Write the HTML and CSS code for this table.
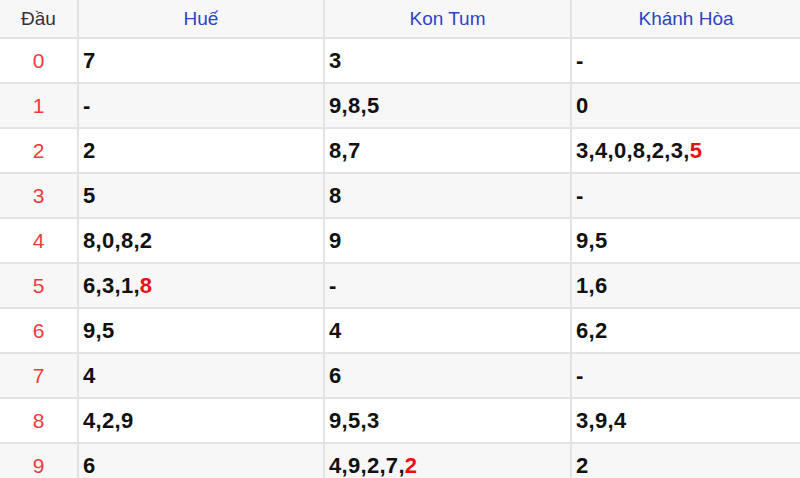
FILE: index.html
```html
<!DOCTYPE html>
<html>
<head>
<meta charset="utf-8">
<link rel="stylesheet" href="styles.css">
</head>
<body>
<table class="loto">
  <colgroup>
    <col class="c-dau"><col class="c-prov"><col class="c-prov2"><col>
  </colgroup>
  <thead>
    <tr><th class="dau-h">Đầu</th><th>Huế</th><th>Kon Tum</th><th>Khánh Hòa</th></tr>
  </thead>
  <tbody>
    <tr><td class="dau">0</td><td>7</td><td>3</td><td>-</td></tr>
    <tr><td class="dau">1</td><td>-</td><td>9,8,5</td><td>0</td></tr>
    <tr><td class="dau">2</td><td>2</td><td>8,7</td><td>3,4,0,8,2,3,<span class="hl">5</span></td></tr>
    <tr><td class="dau">3</td><td>5</td><td>8</td><td>-</td></tr>
    <tr><td class="dau">4</td><td>8,0,8,2</td><td>9</td><td>9,5</td></tr>
    <tr><td class="dau">5</td><td>6,3,1,<span class="hl">8</span></td><td>-</td><td>1,6</td></tr>
    <tr><td class="dau">6</td><td>9,5</td><td>4</td><td>6,2</td></tr>
    <tr><td class="dau">7</td><td>4</td><td>6</td><td>-</td></tr>
    <tr><td class="dau">8</td><td>4,2,9</td><td>9,5,3</td><td>3,9,4</td></tr>
    <tr><td class="dau">9</td><td>6</td><td>4,9,2,7,<span class="hl">2</span></td><td>2</td></tr>
  </tbody>
</table>
</body>
</html>
```
FILE: styles.css
```css
html, body {
  margin: 0;
  padding: 0;
  background: #fff;
}
.loto {
  width: 800px;
  border-collapse: collapse;
  table-layout: fixed;
  font-family: "Liberation Sans", Arial, sans-serif;
}
.c-dau { width: 78px; }
.c-prov { width: 246px; }
.c-prov2 { width: 247px; }
.loto th, .loto td {
  border: 2px solid #e3e3e3;
  padding: 0 0 0 4px;
}
.loto tr > :first-child { border-left: none; }
.loto tr > :last-child { border-right: none; }
.loto thead th {
  border-top: none;
  height: 37px;
  background: #f7f7f7;
  font-weight: normal;
  font-size: 19px;
  color: #2b45c4;
  text-align: center;
  padding: 0;
}
.loto thead th.dau-h { color: #333; }
.loto td {
  height: 43px;
  font-size: 22px;
  font-weight: bold;
  letter-spacing: 0.3px;
  color: #111;
}
.loto tbody tr:nth-child(even) td { background: #f7f7f7; }
.loto td.dau {
  text-align: center;
  font-weight: normal;
  font-size: 21px;
  letter-spacing: 0;
  color: #ec3b3b;
  padding: 0;
}
.hl { color: #e81010; }
```
